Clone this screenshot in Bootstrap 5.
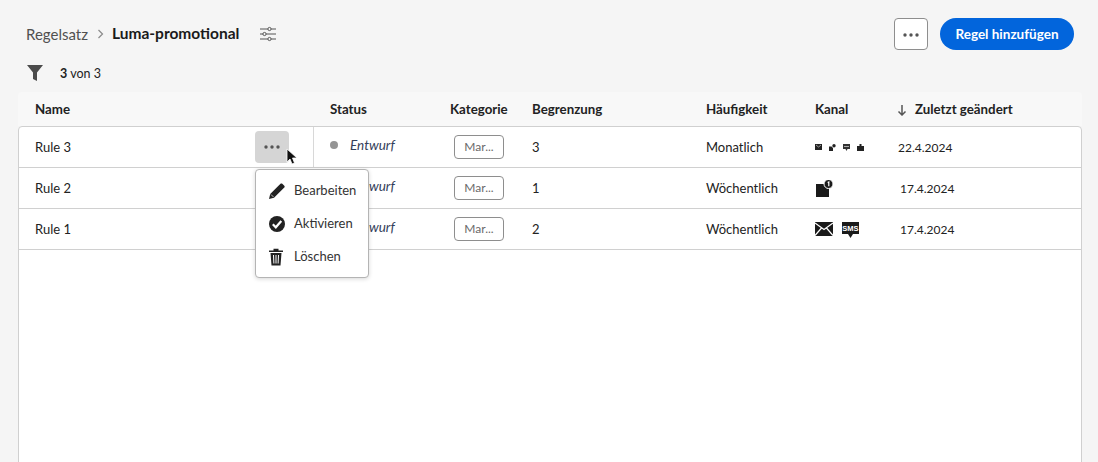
<!DOCTYPE html>
<html lang="de">
<head>
  <meta charset="UTF-8">
  <title>Regelsatz</title>
  <link href="https://cdn.jsdelivr.net/npm/bootstrap@5.3.0/dist/css/bootstrap.min.css" rel="stylesheet">
  <style>
    html, body { height: 462px; overflow: hidden; }
    body { background: #f5f5f5; font-family: "Lato", "Liberation Sans", sans-serif; font-size: 13px; color: #222; }
    .page-head { height: 62px; padding: 18px 24px 0 26px; }
    .crumb-root { font-size: 15px; color: #505050; }
    .crumb-sep { color: #8a8a8a; margin: 0 8px 0 9px; }
    .crumb-now { font-size: 15.5px; font-weight: 700; color: #1a1a1a; }
    .more-btn { width: 34px; height: 32px; background: #fff; border: 1px solid #8e8e8e; border-radius: 4px; padding: 0; }
    .add-btn { height: 32px; width: 134px; border-radius: 16px; background: #0265dc; color: #fff; border: 0; font-weight: 700; font-size: 13.5px; padding: 0; }
    .filter-bar { height: 22px; margin-bottom: 8px; padding-left: 26px; font-size: 12.5px; }
    .filter-count { margin-top: 3px; }
    .table-wrap { margin: 0 16px 0 18px; }
    .head-row, .body-row { display: grid; align-items: center; }
    .head-row { grid-template-columns: 312px 120px 82px 174px 109px 82px 1fr; height: 34px; padding-top: 2px; background: #f8f8f8; font-size: 13.3px; font-weight: 700; border-radius: 4px 4px 0 0; }
    .head-row .first-cell { padding-left: 17px; }
    .body-row { grid-template-columns: 295px 136px 82px 174px 109px 83px 1fr; height: 41px; border-bottom: 1px solid #d0d0d0; }
    .table-body { background: #fff; border: 1px solid #d0d0d0; border-radius: 4px 4px 0 0; height: 340px; }
    .first-cell { padding-left: 16px; }
    .cell-low { padding-top: 2px; }
    .name-cell { height: 100%; display: flex; align-items: center; justify-content: space-between; }
    .divided { border-right: 1px solid #d8d8d8; padding-right: 24px; }
    .status-cell { padding-left: 16px; padding-bottom: 4px; }
    .status-dot { width: 8px; height: 8px; border-radius: 50%; background: #959595; margin-right: 12px; }
    .status-text { font-size: 13.5px; font-style: italic; color: #34405a; }
    .cat-tag { display: block; width: 50px; height: 24px; line-height: 22px; margin-left: 4px; border: 1px solid #8e8e8e; border-radius: 4px; font-size: 12px; color: #6a6a6a; text-align: center; }
    .row-more { width: 34px; height: 32px; border-radius: 4px; background: #d5d5d5; }
    .row-menu { position: absolute; left: 255px; top: 169px; width: 114px; height: 109px; background: #fff; border: 1px solid #b4b4b4; border-radius: 4px; box-shadow: 0 1px 4px rgba(0,0,0,.16); padding-top: 4px; z-index: 5; }
    .menu-line { height: 33px; padding-left: 12px; gap: 8px; color: #333; }
    .cursor-arrow { position: absolute; left: 286px; top: 148px; z-index: 6; }
    .channel-small { gap: 7px; }
    .channel-big { gap: 9px; }
    .date-cell { font-size: 12px; }
    .date-cell-in { padding-left: 2px; }
  </style>
</head>
<body>

<!-- Kopfzeile -->
<div class="page-head d-flex justify-content-between align-items-start">
  <div class="d-flex align-items-center" style="height:32px">
    <span class="crumb-root">Regelsatz</span>
    <svg class="crumb-sep" width="7" height="10" viewBox="0 0 7 10"><path d="M1.5 1l4 4-4 4" fill="none" stroke="currentColor" stroke-width="1.2"/></svg>
    <span class="crumb-now">Luma-promotional</span>
    <svg class="ms-3 ps-1" width="22" height="16" viewBox="0 0 18 16" fill="none" stroke="#555" stroke-width="1"><path d="M1 3h8M12 3h5M1 8h3M7 8h10M1 13h8M12 13h5"/><circle cx="10.5" cy="3" r="1.6"/><circle cx="5.5" cy="8" r="1.6"/><circle cx="10.5" cy="13" r="1.6"/></svg>
  </div>
  <div class="d-flex gap-2 ms-auto">
    <button class="more-btn me-1"><svg width="16" height="4" viewBox="0 0 16 4" fill="#555"><circle cx="2" cy="2" r="1.7"/><circle cx="8" cy="2" r="1.7"/><circle cx="14" cy="2" r="1.7"/></svg></button>
    <button class="add-btn">Regel hinzufügen</button>
  </div>
</div>

<!-- Filter -->
<div class="filter-bar d-flex align-items-center">
  <svg width="18" height="18" viewBox="0 0 18 18" fill="#4b4b4b"><path d="M1 1h16l-6 7.5V17l-4-2V8.500z"/></svg>
  <span class="ms-3 filter-count"><b>3</b> von 3</span>
</div>

<div class="table-wrap">
  <div class="head-row">
    <div class="first-cell">Name</div>
    <div>Status</div>
    <div>Kategorie</div>
    <div>Begrenzung</div>
    <div>Häufigkeit</div>
    <div>Kanal</div>
    <div class="d-flex align-items-center">
      <svg class="me-2" width="10" height="11" viewBox="0 0 10 11" fill="none" stroke="#555" stroke-width="1.5"><path d="M5 0v10M1.500 6.500L5 10l3.500-3.500"/></svg>
      <span>Zuletzt geändert</span>
    </div>
  </div>

  <div class="table-body">
    <div class="body-row">
      <div class="first-cell name-cell divided">
        <span class="cell-low">Rule 3</span>
        <div class="row-more d-flex align-items-center justify-content-center"><svg width="16" height="4" viewBox="0 0 16 4" fill="#555"><circle cx="2" cy="2" r="1.7"/><circle cx="8" cy="2" r="1.7"/><circle cx="14" cy="2" r="1.7"/></svg></div>
      </div>
      <div class="status-cell d-flex align-items-center"><span class="status-dot"></span><span class="status-text">Entwurf</span></div>
      <div><span class="cat-tag">Mar...</span></div>
      <div class="cell-low">3</div>
      <div class="cell-low">Monatlich</div>
      <div class="d-flex align-items-center channel-small">
        <svg width="7" height="6" viewBox="0 0 7 6"><rect width="7" height="6" fill="#222"/><path d="M1 1l2.500 2L6 1" fill="none" stroke="#ccc" stroke-width=".7"/></svg>
        <svg width="7" height="7" viewBox="0 0 7 7" fill="#222"><path d="M0 2.500h2.500l1.500 1.500v3H0z"/><circle cx="5" cy="1.800" r="1.700"/></svg>
        <svg width="7" height="7" viewBox="0 0 7 7" fill="#333"><path d="M0 0h7v5H4.500L3.500 7l-1-2H0z"/><path d="M1 2.500h5" stroke="#ccc" stroke-width=".8"/></svg>
        <svg width="7" height="7" viewBox="0 0 7 7" fill="#222"><rect y="2" width="7" height="5"/><rect x="2.500" width="2" height="4"/></svg>
      </div>
      <div class="date-cell cell-low">22.4.2024</div>
    </div>
    <div class="body-row">
      <div class="first-cell cell-low">Rule 2</div>
      <div class="status-cell d-flex align-items-center"><span class="status-dot"></span><span class="status-text">Entwurf</span></div>
      <div><span class="cat-tag">Mar...</span></div>
      <div class="cell-low">1</div>
      <div class="cell-low">Wöchentlich</div>
      <div class="d-flex">
        <svg width="20" height="17" viewBox="0 0 20 17"><path d="M1 4h8l5 4v9H1z" fill="#1a1a1a"/><circle cx="13.500" cy="4" r="4.500" fill="#1a1a1a" stroke="#fff" stroke-width="1"/><path d="M12.700 2.600l1.100-.6v4.300" fill="none" stroke="#fff" stroke-width="1.200"/></svg>
      </div>
      <div class="date-cell date-cell-in cell-low">17.4.2024</div>
    </div>
    <div class="body-row">
      <div class="first-cell cell-low">Rule 1</div>
      <div class="status-cell d-flex align-items-center"><span class="status-dot"></span><span class="status-text">Entwurf</span></div>
      <div><span class="cat-tag">Mar...</span></div>
      <div class="cell-low">2</div>
      <div class="cell-low">Wöchentlich</div>
      <div class="d-flex channel-big cell-low">
        <svg width="18" height="14" viewBox="0 0 18 14"><rect width="18" height="14" fill="#1a1a1a"/><path d="M0 1l9 6.500L18 1M0 13.500l6.500-7.500M18 13.500l-6.500-7.500" fill="none" stroke="#fff" stroke-width="1.200"/></svg>
        <svg width="17" height="16" viewBox="0 0 17 16"><path d="M0 0h17v12h-6l-2.500 4L6 12H0z" fill="#1a1a1a"/><text x="8.500" y="9" text-anchor="middle" font-family="Liberation Sans" font-weight="700" font-size="7.500" fill="#fff">SMS</text></svg>
      </div>
      <div class="date-cell date-cell-in cell-low">17.4.2024</div>
    </div>
  </div>
</div>

<!-- Kontextmenü -->
<div class="row-menu">
  <div class="menu-line d-flex align-items-center">
    <svg width="18" height="18" viewBox="0 0 18 18" fill="#222"><path d="M1 17l1.200-5L12.500 1.800c.5-.5 1.300-.5 1.800 0l2 2c.5.500.5 1.300 0 1.800L6 15.800z"/><path d="M3 12.500l2.500 2.500" stroke="#fff" stroke-width=".7"/></svg>
    <span>Bearbeiten</span>
  </div>
  <div class="menu-line d-flex align-items-center">
    <svg width="18" height="18" viewBox="0 0 18 18"><circle cx="9" cy="9" r="8" fill="#222"/><path d="M4.800 9.300l3 3 5.500-6.300" fill="none" stroke="#fff" stroke-width="2.200"/></svg>
    <span>Aktivieren</span>
  </div>
  <div class="menu-line d-flex align-items-center">
    <svg width="18" height="18" viewBox="0 0 18 18" fill="#222"><path d="M1 2.500h14V4H1zM5.500.8h5v2h-5z"/><path d="M2.500 5h11l-1 12.500h-9zM5 7l.4 8.500h1L6 7zM7.500 7v8.500h1V7zM10 7l-.4 8.500h1L11 7z" fill-rule="evenodd"/></svg>
    <span>Löschen</span>
  </div>
</div>

<svg class="cursor-arrow" width="12" height="18" viewBox="0 0 12 18"><path d="M1 1v13l3-3 2 5 2.500-1-2-5h4.500z" fill="#111" stroke="#fff" stroke-width=".8"/></svg>

<script src="https://cdn.jsdelivr.net/npm/bootstrap@5.3.0/dist/js/bootstrap.bundle.min.js"></script>
</body>
</html>
